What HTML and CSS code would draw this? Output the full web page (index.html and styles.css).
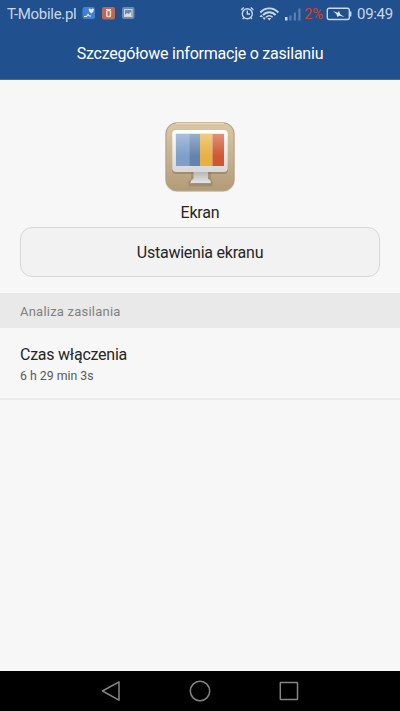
FILE: index.html
```html
<!DOCTYPE html>
<html lang="pl">
<head>
<meta charset="utf-8">
<meta name="viewport" content="width=device-width, initial-scale=1">
<title>Szczegółowe informacje o zasilaniu</title>
<link rel="stylesheet" href="styles.css">
</head>
<body>
<div class="screen">
  <header class="header">
    <div class="status">
      <span class="carrier">T-Mobile.pl</span>
      <svg class="notices" width="54" height="14" viewBox="0 0 54 14">
        <rect x="0.5" y="1" width="12.5" height="12" rx="2" fill="#3f80d0"/>
        <path d="M2 10.500h2.500l1.500-2 1.500 1.500H9" fill="none" stroke="#dce8f6" stroke-width="1.200"/>
        <path d="M6.500 3L8 2.500l1.200 1 1.200-1L12 3l-.8 2.800-1.900 1.700-1.900-1.700z" fill="#e8f0fa"/>
        <rect x="20" y="1" width="13" height="12.500" rx="2" fill="#b96a57"/>
        <rect x="24.800" y="4.500" width="3.600" height="6" rx=".8" fill="none" stroke="#f2dfd8" stroke-width="1.500"/>
        <path d="M24 3.500h5" stroke="#f2dfd8"/>
        <rect x="40" y="1" width="12.500" height="12" rx="2" fill="#7189ab"/>
        <rect x="42.500" y="3.500" width="7.500" height="7" fill="none" stroke="#cbd6e5"/>
        <path d="M43 9l2-2 1.500 1L49 6v4h-6z" fill="#d7e0eb"/>
      </svg>
      <svg class="signals" width="62" height="18" viewBox="0 0 62 18">
        <g fill="none" stroke="#c8d7e9" stroke-width="1.400">
          <circle cx="7.300" cy="9.700" r="5"/>
          <path d="M7.300 6.500v3.500h2.700M1.200 6l2.600-2.400M10.800 3.600L13.400 6M4 13.600l-1.300 1.400M10.600 13.600l1.300 1.400"/>
          <path d="M20.300 8.500C25.300 3 33.300 3 38.300 8.500M23 11.200c3.500-4 9-4 12.600 0" stroke-width="1.900"/>
          <path d="M26 13.300c2-2 4.600-2 6.600 0" stroke-width="1.600"/>
        </g>
        <path d="M27.300 14h4l-2 2.500zM19.400 13l1.800-2.500 1.800 2.500zM22.400 13.500H26l-1.800 2.500z" fill="#c8d7e9"/>
        <path d="M45 13h2.500v3.500H45z" fill="#c8d7e9"/>
        <path d="M49.300 11.500h2.200v5h-2.200zM53.800 8.500H56v8h-2.200zM58.300 4.500h2.200v12h-2.200z" fill="#587eaf"/>
      </svg>
      <span class="percent">2%</span>
      <svg class="battery" width="26" height="14" viewBox="0 0 26 14">
        <rect x="1.300" y="1.200" width="22" height="11.300" rx="1.800" fill="none" stroke="#c8d7e9" stroke-width="1.400"/>
        <path d="M24.600 4.500v5" stroke="#c8d7e9" stroke-width="1.600"/>
        <path d="M7 4l4.500 1.800L13 4l1.300 3.200L18.500 10l-5-1.200L11.500 10l-1.200-3z" fill="#dce6f2"/>
      </svg>
      <span class="clock">09:49</span>
    </div>
    <h1 class="title">Szczegółowe informacje o zasilaniu</h1>
  </header>
  <main class="content">
    <section class="summary">
      <svg class="app-icon" width="72" height="72" viewBox="0 0 72 72">
        <defs>
          <linearGradient id="tile" x2="0" y2="1"><stop stop-color="#dac7a6"/><stop offset="1" stop-color="#b39b77"/></linearGradient>
          <linearGradient id="frame" x2="0" y2="1"><stop stop-color="#fff"/><stop offset="1" stop-color="#d7d7d7"/></linearGradient>
          <linearGradient id="foot" x2="0" y2="1"><stop stop-color="#b5b5b5"/><stop offset="1" stop-color="#e6e6e6"/></linearGradient>
          <linearGradient id="shine" x2="0" y2="1"><stop stop-color="#fff" stop-opacity=".34"/><stop offset="1" stop-color="#fff" stop-opacity="0"/></linearGradient>
        </defs>
        <rect x="1" y="1.200" width="70" height="69.800" rx="12" fill="#ddd8d0"/>
        <rect x="2" y="1.800" width="68" height="68" rx="11" fill="url(#tile)" stroke="#b3a082"/>
        <path d="M12 2.300h48" stroke="#eee2cc"/>
        <rect x="8" y="11" width="56" height="42" rx="4" fill="#7e6d55" opacity=".45"/>
        <path d="M27 51h20v7l2 3-1 4.500H25L24 61l3-3z" fill="#7e6d55" opacity=".35"/>
        <path d="M29.500 50.500h14.500v7.500c2 0 3 2.500 3 4.500H26.500c0-2 1-4.500 3-4.500z" fill="url(#foot)"/>
        <path d="M27 62.800h20" stroke="#8d8272" stroke-width="1"/>
        <rect x="8.200" y="9" width="55.600" height="42" rx="4" fill="url(#frame)"/>
        <rect x="11.500" y="12.500" width="49" height="33" fill="#d6dce3"/>
        <path fill="#7d9fc9" d="M12 13h13.200v32H12z"/>
        <path fill="#6484af" d="M25.200 13H36v32H25.200z"/>
        <path fill="#e8b142" d="M36 13h12.500v32H36z"/>
        <path fill="#cf5732" d="M48.500 13H60v32H48.500z"/>
        <path fill="url(#shine)" d="M12 13h48v22H12z"/>
      </svg>
      <div class="app-name">Ekran</div>
      <button class="settings">Ustawienia ekranu</button>
    </section>
    <h2 class="section-title">Analiza zasilania</h2>
    <div class="row">
      <div class="row-title">Czas włączenia</div>
      <div class="row-value">6 h 29 min 3s</div>
    </div>
  </main>
  <nav class="nav">
    <svg width="22" height="22" viewBox="0 0 22 22"><path d="M19 1.800v18.400L2.500 11z"/></svg>
    <svg width="22" height="22" viewBox="0 0 22 22"><circle cx="11" cy="11" r="9.700"/></svg>
    <svg width="22" height="22" viewBox="0 0 22 22"><rect x="2.300" y="2.500" width="17.200" height="17" rx=".6"/></svg>
  </nav>
</div>
</body>
</html>
```

FILE: styles.css
```css
* { box-sizing: border-box; }
body { margin: 0; font-family: Roboto, "Noto Sans", sans-serif; }
.screen {
  display: flex;
  flex-direction: column;
  width: 400px;
  height: 711px;
  background: #f7f7f7;
  overflow: hidden;
}
.header { height: 80px; background: #20508e; border-bottom: 1px solid #456b9c; }
.status {
  display: flex;
  align-items: center;
  height: 28px;
  padding: 0 7px;
  color: #c8d7e9;
  font-size: 15px;
  letter-spacing: -0.3px;
  line-height: 28px;
  white-space: nowrap;
}
.carrier { width: 75px; }
.notices { margin-top: -2px; }
.signals { margin-left: auto; margin-top: -2px; }
.percent { width: 20px; margin-left: 2px; color: #cb432e; }
.battery { margin-left: 2px; }
.clock { width: 36px; margin-left: 5px; }
.title {
  margin: 11px 0 0;
  color: #fff;
  font-size: 16px;
  font-weight: 400;
  letter-spacing: -0.23px;
  line-height: 30px;
  text-align: center;
}
.content { flex: 1; color: #262626; }
.summary {
  display: flex;
  flex-direction: column;
  align-items: center;
  height: 213px;
  padding: 41px 20px 0;
}
.app-icon { flex: none; }
.app-name { margin-top: 10px; font-size: 16px; letter-spacing: -0.2px; line-height: 20px; }
.settings {
  width: 360px;
  height: 50px;
  margin-top: 4px;
  padding: 0;
  border: 1px solid #d7d7d7;
  border-radius: 12px;
  background: #f2f2f2;
  color: #262626;
  font: 16px Roboto, sans-serif;
  letter-spacing: -0.23px;
}
.section-title {
  height: 35px;
  margin: 0;
  padding-left: 20px;
  background: #e9e9e9;
  color: #808080;
  font-size: 13px;
  letter-spacing: 0.22px;
  font-weight: 400;
  line-height: 37px;
}
.row { height: 72px; padding: 16px 20px 0; border-bottom: 2px solid #eaeaea; }
.row-title { font-size: 16px; letter-spacing: -0.24px; line-height: 22px; }
.row-value { color: #595959; font-size: 12.3px; line-height: 20px; }
.nav {
  display: flex;
  justify-content: center;
  align-items: center;
  gap: 67px;
  height: 40px;
  background: #000;
}
.nav svg { fill: none; stroke: #858585; stroke-width: 1.5; stroke-linejoin: round; }
```
